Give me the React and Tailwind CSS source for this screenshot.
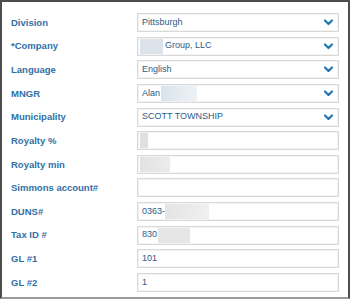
import React from "react";

const Chevron = () => (
  <svg width="9" height="7" viewBox="0 0 9 7" className="shrink-0">
    <polyline points="1,1.5 4.5,5 8,1.5" fill="none" stroke="#1f78b4" strokeWidth="2.2" strokeLinecap="round" strokeLinejoin="round" />
  </svg>
);

const Blur = ({ w, cls = "" }) => (
  <span className={`inline-block h-[15px] ${cls}`} style={{ width: w }} />
);

const Field = ({ children, select }) => (
  <div className="w-[202px] h-[19px] border border-[#d9d9d9] shadow-[inset_0_0_0_1px_#f2f2f2] bg-white flex items-center pl-[4px] pr-[5px] text-[9px] text-[#2d5b86]">
    <div className="flex-1 flex items-center min-w-0 whitespace-nowrap">{children}</div>
    {select && <Chevron />}
  </div>
);

const rows = [
  { label: "Division", select: true, v: <span>Pittsburgh</span> },
  { label: "*Company", select: true, v: <><Blur w={23} cls="-ml-[2px] bg-[#dde3ea]" /><span className="ml-[2px]">Group, LLC</span></> },
  { label: "Language", select: true, v: <span>English</span> },
  { label: "MNGR", select: true, v: <><span>Alan</span><Blur w={36} cls="ml-[1px] bg-gradient-to-r from-[#d9e3ec] to-[#eef2f6]" /></> },
  { label: "Municipality", select: true, v: <span>SCOTT TOWNSHIP</span> },
  { label: "Royalty %", v: <Blur w={8} cls="-ml-[2px] bg-[#e0e0e0]" /> },
  { label: "Royalty min", v: <Blur w={30} cls="-ml-[2px] bg-gradient-to-r from-[#e2e2e2] to-[#ececec]" /> },
  { label: "Simmons account#", v: null },
  { label: "DUNS#", v: <><span>0363-</span><Blur w={44} cls="bg-gradient-to-r from-[#e4e4e4] to-[#f0f0f0]" /></> },
  { label: "Tax ID #", v: <><span>830</span><Blur w={32} cls="ml-[1px] bg-[#e6e6e6]" /></> },
  { label: "GL #1", v: <span>101</span> },
  { label: "GL #2", v: <span>1</span> },
];

export default function App() {
  return (
    <div
      className="w-[350px] h-[299px] bg-white border-l-2 border-t-2 border-r-2 border-b-2 border-[#4d4d4d] border-b-[#9a9a9a] pt-[11px] pl-[9px] flex flex-col gap-[4.64px]"
      style={{ fontFamily: '"Liberation Sans", Arial, sans-serif' }}
    >
      {rows.map((r) => (
        <div key={r.label} className="flex items-center">
          <div className="w-[126px] text-[9.5px] font-bold text-[#3170a6] leading-none">{r.label}</div>
          <Field select={r.select}>{r.v}</Field>
        </div>
      ))}
    </div>
  );
}
